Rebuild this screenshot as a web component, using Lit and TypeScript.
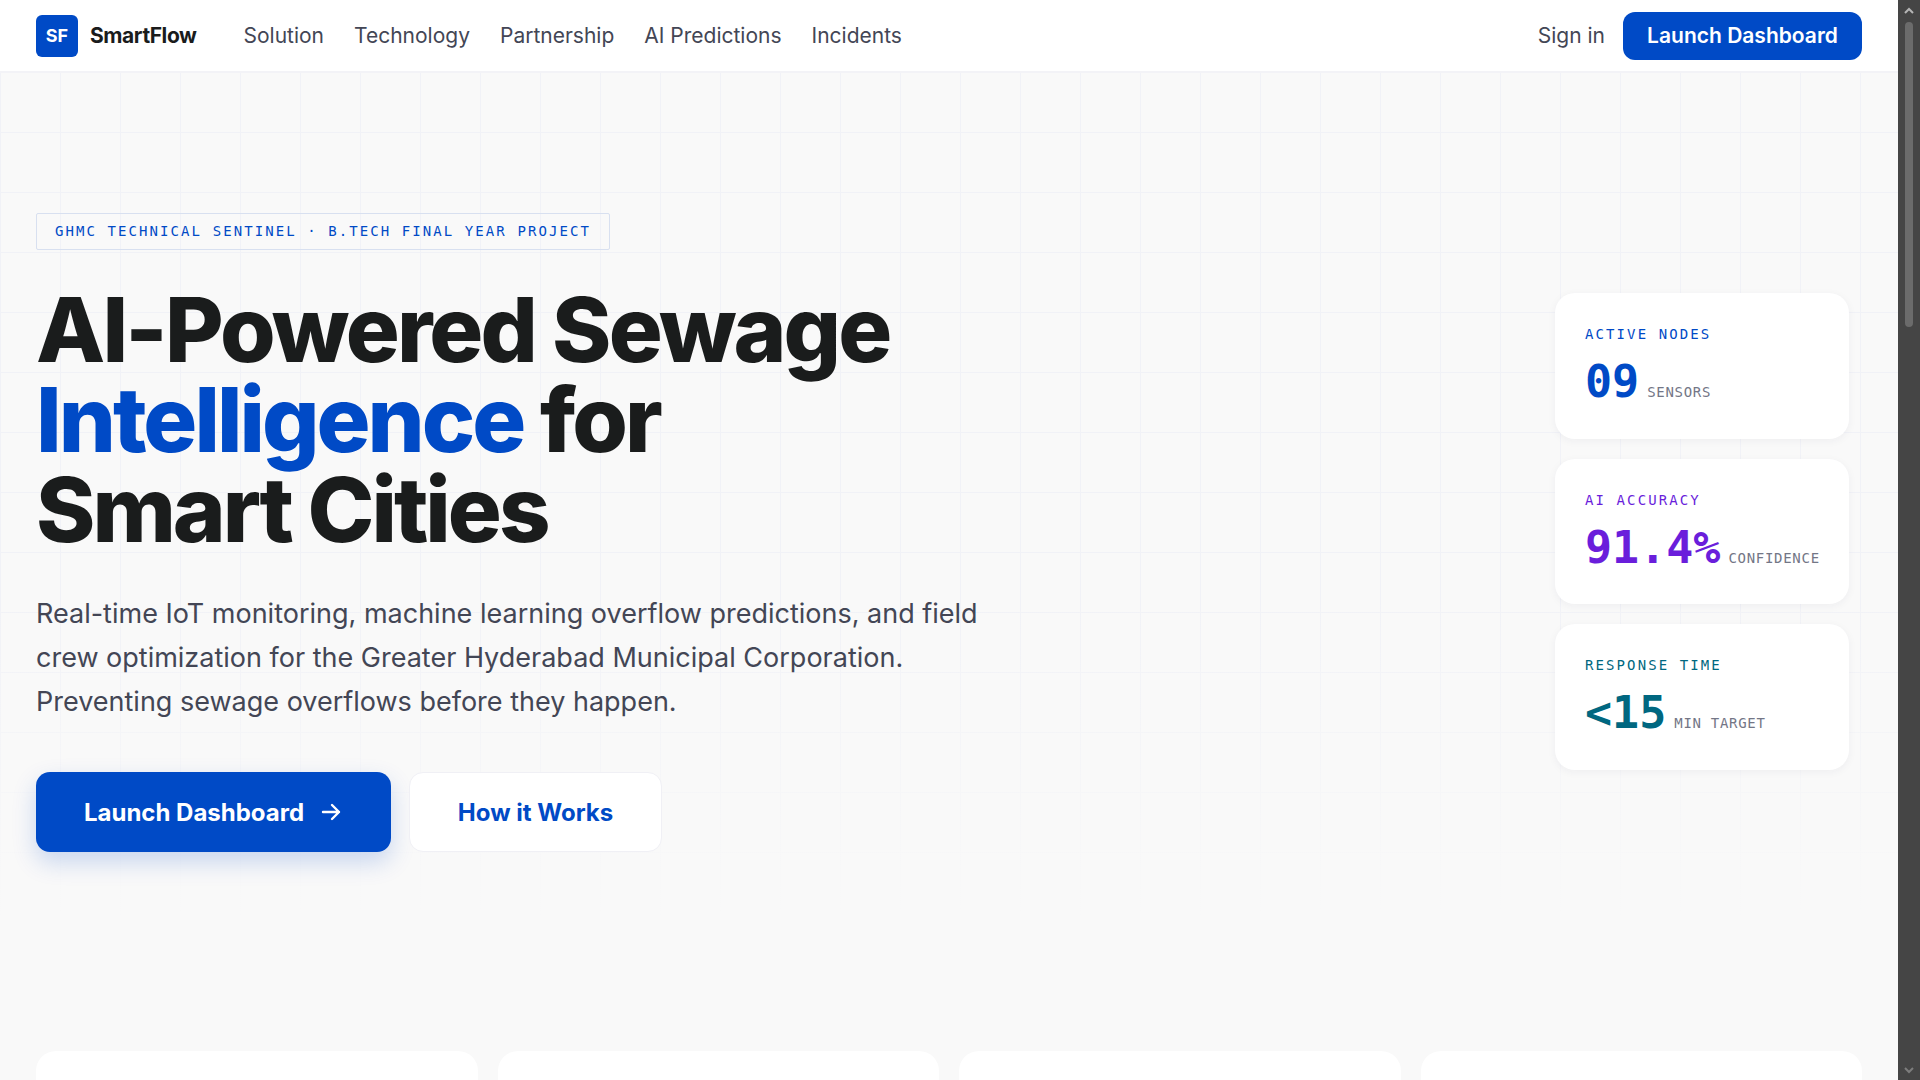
import { LitElement, html, css } from "lit";
import { customElement } from "lit/decorators.js";

const sans = css`Inter, "Noto Sans", sans-serif`;
const mono = css`"DejaVu Sans Mono", "Liberation Mono", monospace`;

const stats = [
  { label: "ACTIVE NODES", value: "09", unit: "SENSORS", tone: "blue" },
  { label: "AI ACCURACY", value: "91.4%", unit: "CONFIDENCE", tone: "purple" },
  { label: "RESPONSE TIME", value: "<15", unit: "MIN TARGET", tone: "teal" },
];

@customElement("app-root")
export class AppRoot extends LitElement {
  static styles = css`
    :host {
      display: flex;
      height: 1080px;
      overflow: hidden;
      font-family: ${sans};
      background: #f9f9f9;
      color: #1a1c1c;
    }

    .page {
      flex: 1;
      min-width: 0;
      display: flex;
      flex-direction: column;
    }

    /* nav */
    .nav {
      flex: none;
      height: 73px;
      box-sizing: border-box;
      display: flex;
      align-items: center;
      padding: 0 36px;
      background: #fff;
      border-bottom: 2px solid #f3f3f7;
    }
    .brand {
      display: flex;
      align-items: center;
      gap: 12px;
      margin-right: 47px;
    }
    .logo {
      width: 42px;
      height: 42px;
      border-radius: 6px;
      background: #004ac6;
      color: #fff;
      display: flex;
      align-items: center;
      justify-content: center;
      font-size: 18px;
      font-weight: 700;
    }
    .brand-name {
      font-size: 21px;
      font-weight: 700;
      letter-spacing: -0.42px;
    }
    .links {
      display: flex;
      gap: 30px;
      flex: 1;
    }
    .links a,
    .sign-in {
      font-size: 21px;
      color: #434655;
    }
    .sign-in {
      margin-right: 18px;
    }
    .nav-cta {
      width: 239px;
      height: 48px;
      border-radius: 12px;
      background: #004ac6;
      color: #fff;
      display: flex;
      align-items: center;
      justify-content: center;
      font-size: 21px;
      font-weight: 600;
    }

    /* hero: the grid fades into the page colour lower down */
    .hero {
      flex: 1;
      min-height: 0;
      display: flex;
      flex-direction: column;
      background-image:
        linear-gradient(rgba(249, 249, 249, 0) 520px, #f9f9f9 842px),
        linear-gradient(#f1f2f7 1px, transparent 1px),
        linear-gradient(90deg, #f1f2f7 1px, transparent 1px);
      background-size: 100% 100%, 60px 60px, 60px 60px;
      background-position: 0 0, 0 -1px, 0 0;
    }
    .hero-main {
      display: flex;
      align-items: center;
      justify-content: space-between;
      padding: 140px 49px 0 36px;
    }
    .badge {
      display: inline-block;
      box-sizing: border-box;
      height: 37px;
      line-height: 34px;
      padding: 0 18px;
      border: 1px solid #d8e0f0;
      border-radius: 2px;
      font-family: ${mono};
      font-size: 14px;
      letter-spacing: 2.08px;
      color: #004ac6;
      white-space: nowrap;
    }
    h1 {
      margin: 35px 0 0;
      font-size: 90px;
      line-height: 90px;
      font-weight: 800;
      letter-spacing: -2.8px;
      color: #1a1c1c;
    }
    h1 .tight {
      letter-spacing: -3px;
    }
    h1 .accent {
      color: #004ac6;
    }
    .lead {
      margin: 37px 0 0;
      width: 960px;
      font-size: 27px;
      line-height: 44px;
      color: #434655;
    }
    .actions {
      display: flex;
      gap: 18px;
      margin-top: 48px;
    }
    .btn {
      box-sizing: border-box;
      height: 80px;
      display: flex;
      align-items: center;
      justify-content: center;
      gap: 15px;
      font-size: 24px;
      font-weight: 700;
      border-radius: 14px;
    }
    .btn.primary {
      width: 355px;
      background: #004ac6;
      color: #fff;
      box-shadow: 0 10px 24px rgba(0, 74, 198, 0.2);
    }
    .btn.secondary {
      width: 253px;
      background: #fff;
      color: #004ac6;
      border: 1px solid #f0f0f5;
    }

    /* stats */
    .stats {
      width: 294px;
      display: flex;
      flex-direction: column;
      gap: 20px;
      margin-top: -2px;
    }
    .stat {
      box-sizing: border-box;
      height: 145.6px;
      padding: 31px 30px 0;
      background: #fff;
      border-radius: 20px;
      box-shadow: 0 2px 8px rgba(30, 40, 80, 0.05);
    }
    .stat-label {
      font-family: ${mono};
      font-size: 14px;
      line-height: 20px;
      letter-spacing: 2.1px;
    }
    .stat-row {
      display: flex;
      align-items: baseline;
      gap: 8px;
      margin-top: 10px;
    }
    .stat-value {
      font-family: ${mono};
      font-size: 45px;
      line-height: 56px;
      font-weight: 700;
    }
    .stat-unit {
      font-family: ${mono};
      font-size: 14px;
      letter-spacing: 0.7px;
      color: #737686;
    }
    .blue { color: #004ac6; }
    .purple { color: #6a1edb; }
    .teal { color: #006780; }

    /* bottom cards, cut off by the fold */
    .cards {
      display: grid;
      grid-template-columns: repeat(4, 1fr);
      gap: 20px;
      padding: 0 36px;
      margin-top: 199px;
    }
    .card {
      height: 200px;
      background: #fff;
      border-radius: 20px;
    }

    /* window scrollbar */
    .scrollbar {
      flex: none;
      width: 22px;
      background: #454545;
      display: flex;
      flex-direction: column;
      align-items: center;
    }
    .scrollbar svg {
      flex: none;
      margin-top: 7px;
    }
    .thumb {
      width: 8px;
      height: 305px;
      margin-top: 8px;
      border-radius: 4px;
      background: #6b6b6b;
    }
    .spacer {
      flex: 1;
    }
    .scrollbar svg.down {
      margin: 0 0 6px;
    }
  `;

  render() {
    return html`
      <div class="page">
        <header class="nav">
          <div class="brand">
            <div class="logo">SF</div>
            <div class="brand-name">SmartFlow</div>
          </div>
          <nav class="links">
            <a>Solution</a>
            <a>Technology</a>
            <a>Partnership</a>
            <a>AI Predictions</a>
            <a>Incidents</a>
          </nav>
          <div class="sign-in">Sign in</div>
          <div class="nav-cta">Launch Dashboard</div>
        </header>

        <section class="hero">
          <div class="hero-main">
            <div>
              <div class="badge">GHMC TECHNICAL SENTINEL · B.TECH FINAL YEAR PROJECT</div>
              <h1>AI-Powered Sewage<br /><span class="tight"><span class="accent">Intelligence</span> for</span><br /><span class="tight">Smart Cities</span></h1>
              <p class="lead">
                Real-time IoT monitoring, machine learning overflow predictions, and field
                crew optimization for the Greater Hyderabad Municipal Corporation.
                Preventing sewage overflows before they happen.
              </p>
              <div class="actions">
                <div class="btn primary">
                  Launch Dashboard
                  <svg width="24" height="24" viewBox="0 0 24 24" fill="none" stroke="currentColor" stroke-width="2.4" stroke-linecap="round" stroke-linejoin="round">
                    <path d="M4 12h16M13 5l7 7-7 7" />
                  </svg>
                </div>
                <div class="btn secondary">How it Works</div>
              </div>
            </div>
            <div class="stats">
              ${stats.map(
                (s) => html`
                  <div class="stat">
                    <div class="stat-label ${s.tone}">${s.label}</div>
                    <div class="stat-row">
                      <span class="stat-value ${s.tone}">${s.value}</span>
                      <span class="stat-unit">${s.unit}</span>
                    </div>
                  </div>
                `
              )}
            </div>
          </div>
          <div class="cards">
            <div class="card"></div>
            <div class="card"></div>
            <div class="card"></div>
            <div class="card"></div>
          </div>
        </section>
      </div>

      <div class="scrollbar">
        <svg width="10" height="7" viewBox="0 0 10 7" fill="none" stroke="#b5b5b5" stroke-width="2">
          <path d="M1 6l4-4 4 4" />
        </svg>
        <div class="thumb"></div>
        <div class="spacer"></div>
        <svg class="down" width="10" height="7" viewBox="0 0 10 7" fill="none" stroke="#7d7d7d" stroke-width="2">
          <path d="M1 1l4 4 4-4" />
        </svg>
      </div>
    `;
  }
}
